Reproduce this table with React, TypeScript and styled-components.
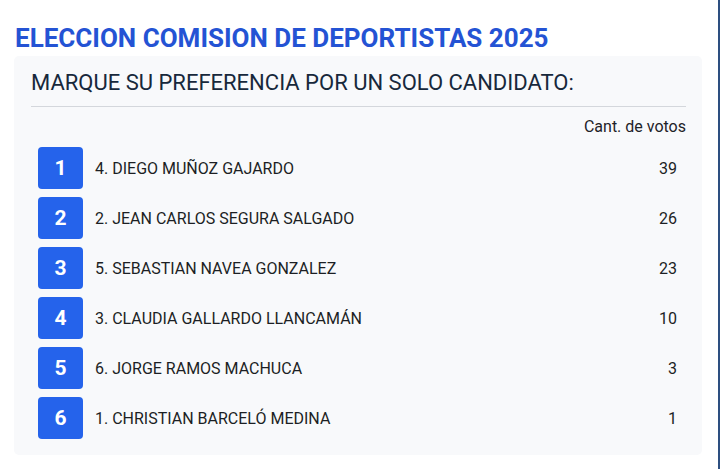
import React from "react";
import styled, { createGlobalStyle } from "styled-components";

const GlobalStyle = createGlobalStyle`
  html, body { margin: 0; padding: 0; background: #ffffff; }
  body { font-family: Roboto, "Noto Sans", Arial, sans-serif; }
`;

const Page = styled.div`
  position: relative;
  width: 720px;
  height: 469px;
  box-sizing: border-box;
  padding: 22px 18px 0 14px;
  display: flex;
  flex-direction: column;
  overflow: hidden;
`;

const EdgeBar = styled.div`
  position: absolute;
  top: 0;
  right: 0;
  width: 2px;
  height: 100%;
  background: #2d4f80;
`;

const Title = styled.h1`
  margin: 0 0 0 1px;
  font-size: 26px;
  line-height: 32px;
  font-weight: 700;
  color: #2453d4;
  letter-spacing: 0;
`;

const Panel = styled.section`
  margin-top: 2px;
  background: #f8f9fb;
  border-radius: 5px;
  padding: 14px 16px 16px 16px;
  display: flex;
  flex-direction: column;
`;

const Subtitle = styled.h2`
  margin: 0 0 0 1px;
  font-size: 22px;
  line-height: 26px;
  font-weight: 400;
  color: #17283b;
  padding-bottom: 10px;
  border-bottom: 1px solid #d4d7dc;
`;

const HeaderRow = styled.div`
  display: flex;
  justify-content: flex-end;
  font-size: 16px;
  line-height: 20px;
  color: #1e2228;
  padding-top: 10px;
  margin-bottom: 10px;
`;

const List = styled.div`
  display: flex;
  flex-direction: column;
  gap: 8px;
  padding-left: 8px;
`;

const Row = styled.div`
  display: flex;
  align-items: center;
  height: 42px;
`;

const Badge = styled.div`
  width: 45px;
  height: 42px;
  border-radius: 4px;
  background: #2563eb;
  color: #ffffff;
  font-size: 21px;
  font-weight: 700;
  display: flex;
  align-items: center;
  justify-content: center;
  flex: none;
`;

const Name = styled.div`
  flex: 1;
  margin-left: 12px;
  font-size: 16px;
  color: #1c1f24;
`;

const Votes = styled.div`
  font-size: 16px;
  color: #1c1f24;
  padding-right: 9px;
`;

const candidates = [
  { name: "4. DIEGO MUÑOZ GAJARDO", votes: 39 },
  { name: "2. JEAN CARLOS SEGURA SALGADO", votes: 26 },
  { name: "5. SEBASTIAN NAVEA GONZALEZ", votes: 23 },
  { name: "3. CLAUDIA GALLARDO LLANCAMÁN", votes: 10 },
  { name: "6. JORGE RAMOS MACHUCA", votes: 3 },
  { name: "1. CHRISTIAN BARCELÓ MEDINA", votes: 1 },
];

export default function App() {
  return (
    <>
      <GlobalStyle />
      <Page>
        <Title>ELECCION COMISION DE DEPORTISTAS 2025</Title>
        <Panel>
          <Subtitle>MARQUE SU PREFERENCIA POR UN SOLO CANDIDATO:</Subtitle>
          <HeaderRow>Cant. de votos</HeaderRow>
          <List>
            {candidates.map((c, i) => (
              <Row key={c.name}>
                <Badge>{i + 1}</Badge>
                <Name>{c.name}</Name>
                <Votes>{c.votes}</Votes>
              </Row>
            ))}
          </List>
        </Panel>
        <EdgeBar />
      </Page>
    </>
  );
}
